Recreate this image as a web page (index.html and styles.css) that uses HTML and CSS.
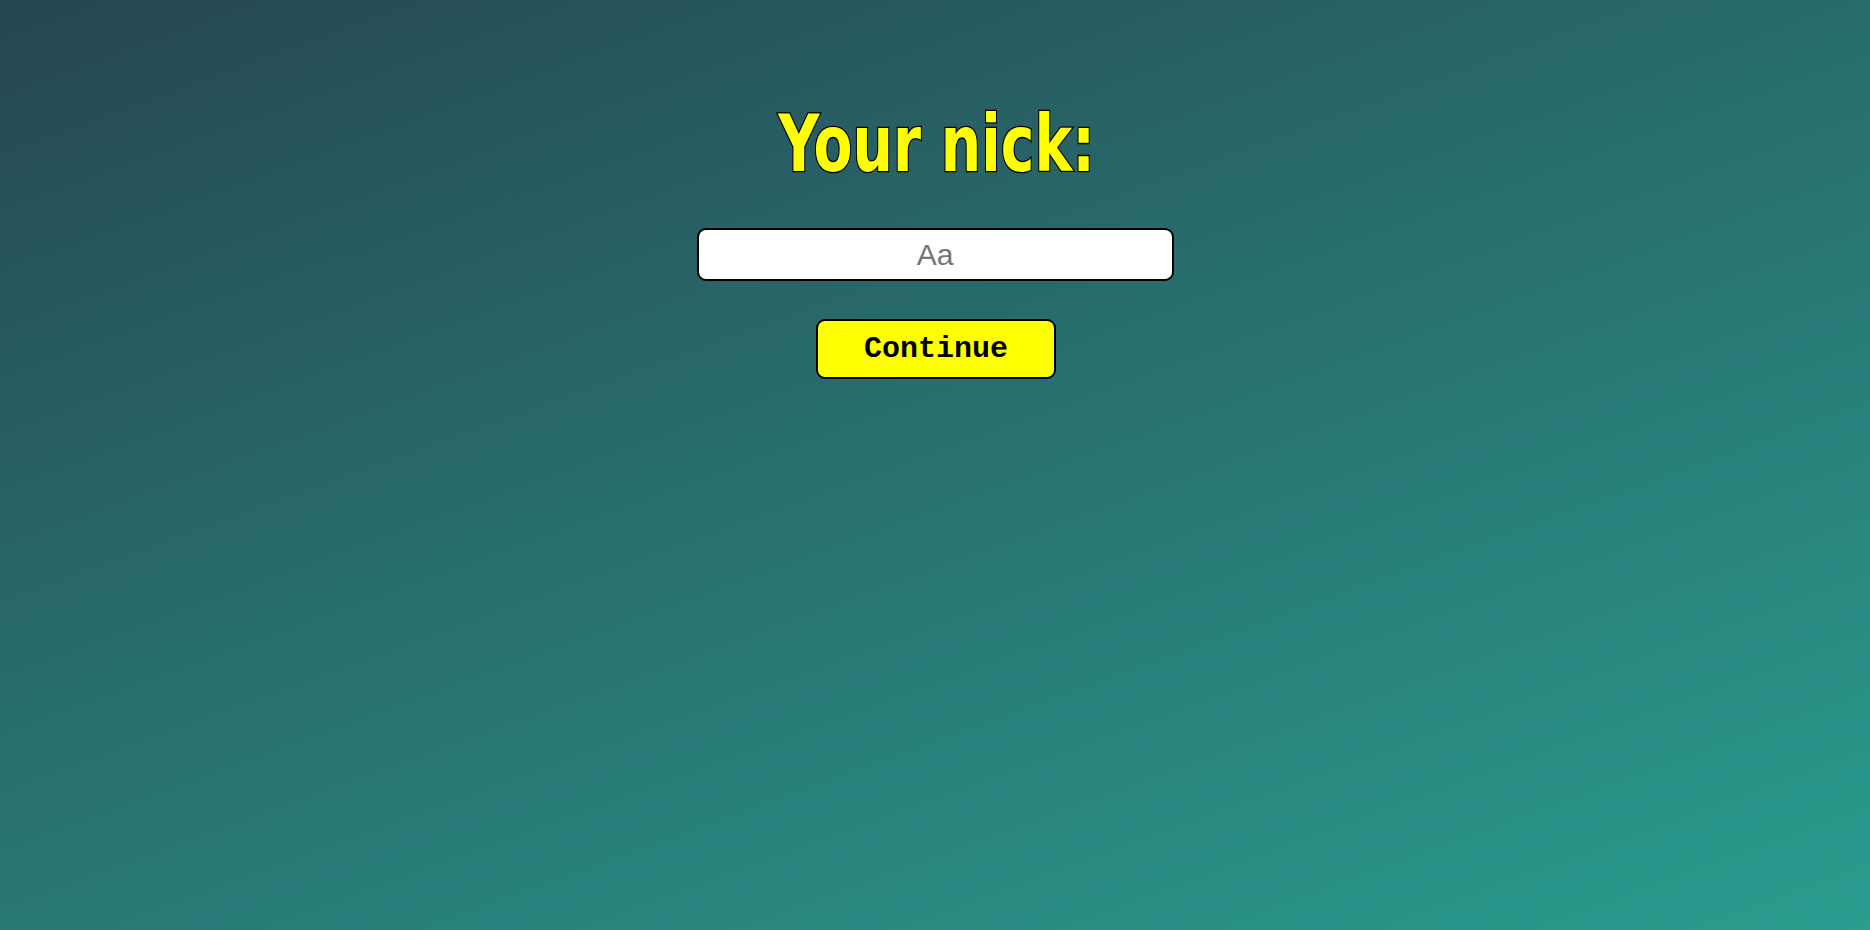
FILE: index.html
```html
<!DOCTYPE html>
<html lang="en">
<head>
<meta charset="utf-8">
<title>Your nick</title>
<link rel="stylesheet" href="styles.css">
</head>
<body>
<main class="screen">
  <h1 class="title">Your nick:</h1>
  <input class="nick-input" type="text" placeholder="Aa">
  <button class="continue-btn" type="button">Continue</button>
</main>
</body>
</html>
```

FILE: styles.css
```css
html, body {
  margin: 0;
  padding: 0;
  height: 100%;
}

body {
  background: linear-gradient(160deg, #264653 0%, #2a9d8f 100%);
  font-family: "Liberation Sans", Arial, sans-serif;
}

.screen {
  display: flex;
  flex-direction: column;
  align-items: center;
  padding-top: 95px;
}

.title {
  margin: 0 0 0 3px;
  font-family: "DejaVu Sans Condensed", "DejaVu Sans", sans-serif;
  font-weight: 700;
  font-size: 78px;
  line-height: 99px;
  color: #ffff00;
  -webkit-text-stroke: 2.6px #000;
  paint-order: stroke fill;
  transform: scaleX(0.81);
}

.nick-input {
  margin-top: 34px;
  box-sizing: border-box;
  width: 477px;
  height: 53px;
  border: 2px solid #000;
  border-radius: 9px;
  background: #fff;
  font-family: "Liberation Sans", Arial, sans-serif;
  font-size: 30px;
  text-align: center;
  outline: none;
  padding: 0 10px;
}

.nick-input::placeholder {
  color: #757575;
}

.continue-btn {
  margin-top: 38px;
  margin-left: 2px;
  box-sizing: border-box;
  width: 240px;
  height: 60px;
  border: 2px solid #000;
  border-radius: 9px;
  background: #ffff00;
  color: #000;
  font-family: "Liberation Mono", "Courier New", monospace;
  font-weight: 700;
  font-size: 30px;
  cursor: pointer;
}
```
